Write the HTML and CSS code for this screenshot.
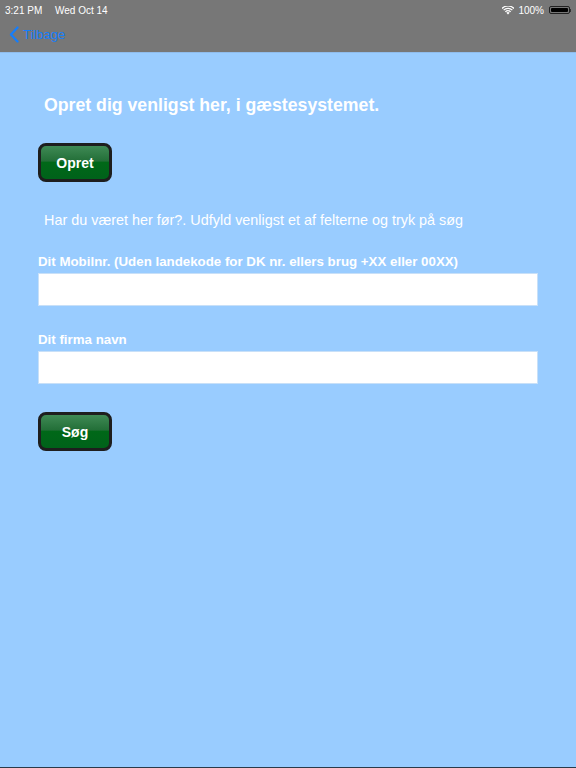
FILE: index.html
```html
<!DOCTYPE html>
<html>

<head>
  <link rel="stylesheet" href="styles.css">
</head>

<body>
  <div class="screen">
    <div class="status-bar">
      <div class="status-left">
        <span>3:21 PM</span>
        <span>Wed Oct 14</span>
      </div>
      <div class="status-right">
        <svg class="wifi" width="12" height="9" viewBox="0 0 12 9">
          <path d="M6 8.6 L4.3 6.8 A2.4 2.4 0 0 1 7.7 6.8 Z" fill="#fff" />
          <path d="M2.9 5.4 A4.4 4.4 0 0 1 9.1 5.4 L8.2 6.3 A3.1 3.1 0 0 0 3.8 6.3 Z" fill="#fff" />
          <path d="M1.2 3.7 A6.8 6.8 0 0 1 10.8 3.7 L9.9 4.6 A5.5 5.5 0 0 0 2.1 4.6 Z" fill="#fff" />
          <path d="M-0.4 2 A9 9 0 0 1 12.4 2 L11.5 2.9 A7.7 7.7 0 0 0 0.5 2.9 Z" fill="#fff" />
        </svg>
        <span>100%</span>
        <div class="battery">
          <div class="battery-fill"></div>
        </div>
        <div class="battery-tip"></div>
      </div>
    </div>
    <div class="nav-bar">
      <a class="back">
        <svg width="11" height="17" viewBox="0 0 11 17">
          <path d="M8.5 1.5 L2 8.5 L8.5 15.5" fill="none" stroke="#157efb" stroke-width="2.3" stroke-linecap="round" stroke-linejoin="round" />
        </svg>
        <span>Tilbage</span>
      </a>
    </div>
    <div class="content">
      <h1 class="title">Opret dig venligst her, i gæstesystemet.</h1>
      <button class="green-button">Opret</button>
      <p class="info">Har du været her før?. Udfyld venligst et af felterne og tryk på søg</p>
      <div class="field">
        <label for="mobile">Dit Mobilnr. (Uden landekode for DK nr. ellers brug +XX eller 00XX)</label>
        <input type="text" id="mobile" />
      </div>
      <div class="field">
        <label for="company">Dit firma navn</label>
        <input type="text" id="company" />
      </div>
      <button class="green-button search">Søg</button>
    </div>
  </div>
</body>

</html>
```

FILE: styles.css
```css
html,
body {
  margin: 0;
  padding: 0;
  height: 100%;
}

body {
  font-family: "Liberation Sans", Arial, sans-serif;
  background-color: #99ccff;
}

.screen {
  display: flex;
  flex-direction: column;
  height: 768px;
  box-sizing: border-box;
  border-bottom: 1px solid #2a3a4a;
}

.status-bar {
  height: 20px;
  background-color: #777777;
  color: #ffffff;
  font-size: 10px;
  display: flex;
  justify-content: space-between;
  align-items: center;
  padding: 0 5px 0 5px;
}

.status-left span {
  margin-right: 10px;
}

.status-right {
  display: flex;
  align-items: center;
  gap: 3px;
}

.wifi {
  margin-right: 1px;
}

.battery {
  width: 21px;
  height: 8px;
  border: 1px solid #222;
  border-radius: 2px;
  padding: 1px;
  box-sizing: border-box;
  margin-left: 2px;
}

.battery-fill {
  width: 100%;
  height: 100%;
  background-color: #000;
  border-radius: 1px;
}

.battery-tip {
  width: 1px;
  height: 3px;
  background-color: #333;
  margin-left: -3px;
}

.nav-bar {
  height: 33px;
  background-color: #777777;
  display: flex;
  align-items: center;
  padding-left: 9px;
  padding-bottom: 4px;
  border-bottom: 1px solid #8fbcec;
  box-sizing: border-box;
}

.back {
  display: flex;
  align-items: center;
  gap: 3px;
  color: #157efb;
  font-size: 13px;
  font-family: "Liberation Sans", Arial, sans-serif;
}

.content {
  flex: 1;
  padding: 0 38px;
  display: flex;
  flex-direction: column;
  align-items: flex-start;
}

.title {
  font-size: 17.7px;
  font-weight: bold;
  color: #ffffff;
  margin: 42px 0 0 6px;
  line-height: 20px;
}

.green-button {
  width: 74px;
  height: 39px;
  margin-top: 28px;
  border: 3px solid #1e1e1e;
  border-radius: 8px;
  background: linear-gradient(to bottom, #3f8a55 0%, #236f38 45%, #006818 50%, #00621a 100%);
  color: #ffffff;
  font-family: "Liberation Sans", Arial, sans-serif;
  font-size: 14px;
  font-weight: bold;
  box-sizing: border-box;
  padding: 0;
}

.info {
  font-size: 14.4px;
  color: #ffffff;
  margin: 29px 0 0 6px;
  line-height: 18px;
}

.field {
  align-self: stretch;
  display: flex;
  flex-direction: column;
  margin-top: 25px;
}

.field + .field {
  margin-top: 26px;
}

.field label {
  font-size: 13.3px;
  font-weight: bold;
  color: #ffffff;
  line-height: 16px;
  margin-bottom: 3px;
}

.field input {
  height: 33px;
  border: 1px solid #c8e0f8;
  background-color: #ffffff;
  box-sizing: border-box;
  outline: none;
  padding: 0 8px;
  font-size: 14px;
}

.search {
  margin-top: 28px;
}
```
